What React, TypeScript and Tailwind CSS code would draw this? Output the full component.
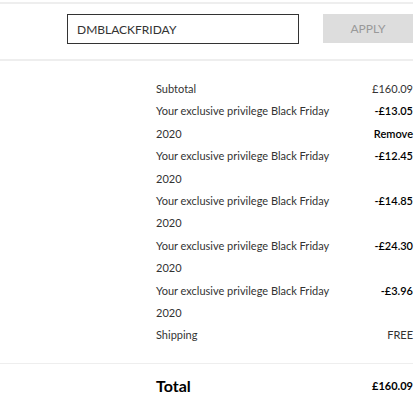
import React from "react";

type Line = { label: string; value: string; strong?: boolean; remove?: boolean };

const lines: Line[] = [
  { label: "Your exclusive privilege Black Friday 2020", value: "-£13.05", strong: true, remove: true },
  { label: "Your exclusive privilege Black Friday 2020", value: "-£12.45", strong: true },
  { label: "Your exclusive privilege Black Friday 2020", value: "-£14.85", strong: true },
  { label: "Your exclusive privilege Black Friday 2020", value: "-£24.30", strong: true },
  { label: "Your exclusive privilege Black Friday 2020", value: "-£3.96", strong: true },
];

const Row: React.FC<{ line: Line }> = ({ line }) => (
  <div className="flex justify-between">
    <p className="w-[185px] text-[#333]">{line.label}</p>
    <div className="flex flex-col items-end">
      <span className={line.strong ? "font-semibold text-black" : "text-[#333]"}>{line.value}</span>
      {line.remove && <button className="font-semibold text-black leading-[22.4px]">Remove</button>}
    </div>
  </div>
);

export default function App() {
  return (
    <div className="w-[420px] h-[420px] bg-white pr-[7px]" style={{ fontFamily: "Lato, 'Open Sans', sans-serif" }}>
      <div className="mt-[2px] h-[2px] bg-[#eeeeee]" />

      <div className="flex items-start pl-[67px] pt-[10px] pb-[15px]">
        <input
          className="w-[232px] h-[30px] border border-[#333] px-[9px] text-[12px] text-[#333] outline-none"
          defaultValue="DMBLACKFRIDAY"
        />
        <button className="ml-auto w-[90px] h-[29px] bg-[#dddddd] text-[12px] text-[#999]">APPLY</button>
      </div>

      <div className="h-[2px] bg-[#eeeeee]" />

      <div className="pl-[156px] pt-[17px] pb-[16px] text-[11px] leading-[22.4px]">
        <div className="flex justify-between text-[#333]">
          <span>Subtotal</span>
          <span>£160.09</span>
        </div>
        {lines.map((l, i) => (
          <Row key={i} line={l} />
        ))}
        <div className="flex justify-between text-[#333]">
          <span>Shipping</span>
          <span>FREE</span>
        </div>
      </div>

      <div className="h-[1px] bg-[#eeeeee]" />

      <div className="flex items-center justify-between pl-[156px] pt-[10px]">
        <span className="text-[16px] font-bold text-black">Total</span>
        <span className="text-[11px] font-bold text-black">£160.09</span>
      </div>
    </div>
  );
}
